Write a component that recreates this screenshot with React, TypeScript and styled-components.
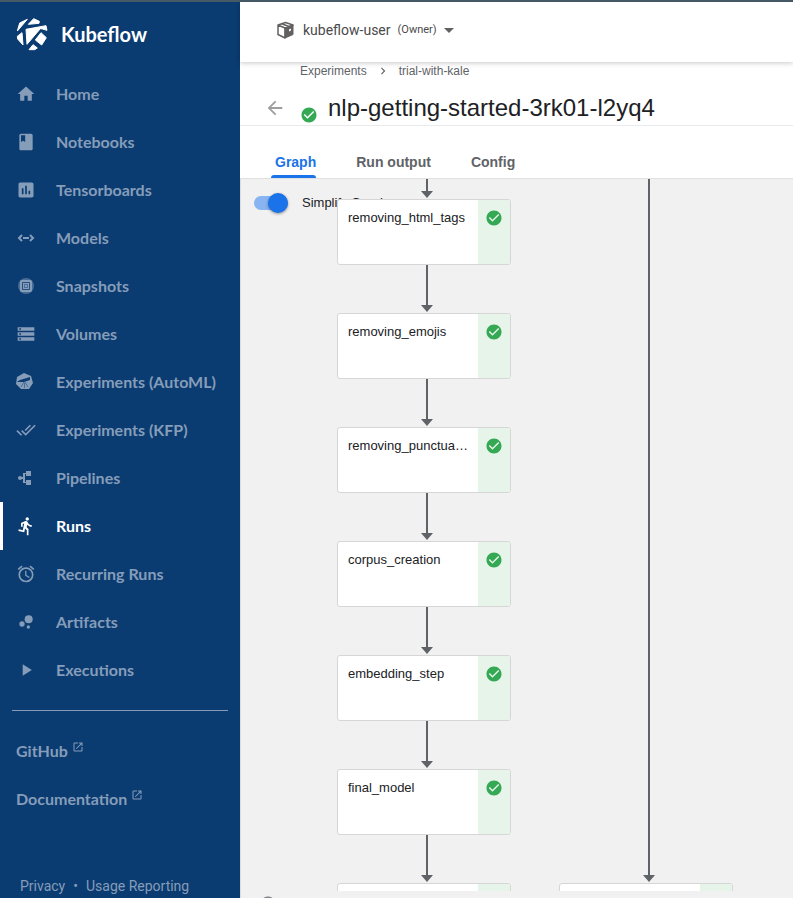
import React from "react";
import styled, { createGlobalStyle } from "styled-components";
import {
  MdHome, MdBook, MdAssessment, MdStorage, MdDoneAll, MdDirectionsRun,
  MdAlarm, MdBubbleChart, MdPlayArrow, MdLaunch, MdCheckCircle, MdArrowBack,
  MdChevronRight, MdInfoOutline,
} from "react-icons/md";

const SANS = '"Liberation Sans", Arial, sans-serif';
const ROBOTO = 'Roboto, "Liberation Sans", sans-serif';
const BRAND = 'Lato, "Open Sans", sans-serif';

const GlobalStyle = createGlobalStyle`
  * { box-sizing: border-box; }
  body { margin: 0; font-family: ${SANS}; color: #202124; }
  button { font: inherit; border: 0; padding: 0; background: none; cursor: pointer; }
  a { color: inherit; text-decoration: none; }
`;

const Page = styled.div`
  display: flex;
  height: 100vh;
  border-top: 2px solid #455a64;
  overflow: hidden;
`;

const Sidebar = styled.nav`
  flex: 0 0 240px;
  display: flex;
  flex-direction: column;
  background: #0a3b71;
  color: #869db9;
`;

const Brand = styled.a`
  display: flex;
  align-items: center;
  gap: 11px;
  height: 64px;
  padding: 0 16px;
  color: #fff;
  font: 700 20px/28px ${BRAND};
`;

const MenuList = styled.ul`
  list-style: none;
  margin: 4px 0 0;
  padding: 0;
`;

const MenuLink = styled.a<{ $active?: boolean }>`
  display: flex;
  align-items: center;
  gap: 20px;
  height: 48px;
  padding-left: ${(p) => (p.$active ? 13 : 16)}px;
  border-left: ${(p) => (p.$active ? "3px solid #fff" : "0")};
  color: ${(p) => (p.$active ? "#fff" : "inherit")};
  font: 700 16px/20px ${BRAND};
  svg { width: 20px; height: 20px; }
`;

const Divider = styled.hr`
  width: calc(100% - 24px);
  margin: 16px 12px;
  border: 0;
  border-top: 1px solid #869db9;
`;

const ExternalLink = styled.a`
  display: flex;
  align-items: center;
  gap: 4px;
  height: 48px;
  padding-left: 16px;
  font: 700 16px/20px ${BRAND};
  svg { width: 12px; height: 12px; margin-bottom: 8px; }
`;

const Legal = styled.footer`
  display: flex;
  gap: 8px;
  margin-top: auto;
  padding: 0 20px 2px;
  font: 400 14px/20px ${ROBOTO};
`;

const Main = styled.main`
  flex: 1;
  min-width: 0;
  display: flex;
  flex-direction: column;
  background: #fff;
`;

const Header = styled.header`
  flex: none;
  display: flex;
  align-items: center;
  height: 60px;
  padding: 0 36px 4px;
  box-shadow: 0 1px 5px rgba(0, 0, 0, 0.22);
`;

const NamespaceButton = styled.button`
  display: flex;
  align-items: center;
  gap: 7px;
  color: #4a4a4a;
  font: 400 14px/20px ${ROBOTO};
  small { font-size: 11px; }
`;

const Crumbs = styled.div`
  display: flex;
  align-items: center;
  gap: 9px;
  height: 18px;
  padding-left: 60px;
  color: #5f6368;
  font-size: 12px;
`;

const TitleRow = styled.div`
  display: flex;
  align-items: center;
  height: 46px;
  padding: 10px 24px 0;
  border-bottom: 1px solid #e8eaed;
`;

const BackButton = styled.button`
  display: flex;
  margin-right: 14px;
  color: #9e9e9e;
`;

const TitleCheck = styled.span`
  display: flex;
  margin: 14px 10px 0 0;
  color: #34a853;
`;

const Title = styled.h1`
  margin: 0;
  font: 400 24px/32px ${SANS};
`;

const Tabs = styled.div`
  display: flex;
  align-items: flex-end;
  gap: 32px;
  height: 53px;
  padding-left: 31px;
  border-bottom: 1px solid #e0e0e0;
`;

const Tab = styled.button<{ $active?: boolean }>`
  display: flex;
  flex-direction: column;
  align-items: flex-start;
  padding: 0 4px;
  color: ${(p) => (p.$active ? "#1a73e8" : "#5f6368")};
  font: 700 14px/26px ${SANS};
  &::after {
    content: "";
    width: calc(100% + 4px);
    height: 3px;
    margin-left: -4px;
    border-radius: 3px 3px 0 0;
    background: ${(p) => (p.$active ? "#1a73e8" : "transparent")};
  }
`;

const GraphPane = styled.section`
  flex: 1;
  min-height: 0;
  position: relative;
  overflow: hidden;
  background: #f1f1f1;
  border-left: 1px solid #dcdcdc;
`;

const ToggleLabel = styled.label`
  display: flex;
  align-items: center;
  gap: 14px;
  padding: 14px 13px;
  font-size: 13px;
  line-height: 20px;
`;

const Toggle = styled.input`
  appearance: none;
  display: flex;
  align-items: center;
  justify-content: flex-end;
  width: 34px;
  height: 14px;
  margin: 0;
  border-radius: 7px;
  background: #88b4f1;
  &::before {
    content: "";
    width: 20px;
    height: 20px;
    border-radius: 50%;
    background: #1a73e8;
    box-shadow: 0 1px 3px rgba(0, 0, 0, 0.4);
  }
`;

const Column = styled.div<{ $left: number }>`
  position: absolute;
  top: 0;
  left: ${(p) => p.$left}px;
  width: 174px;
  display: flex;
  flex-direction: column;
`;

const Edge = styled.div<{ $length: number }>`
  display: flex;
  flex-direction: column;
  align-items: center;
  height: ${(p) => p.$length}px;
  padding: 0 0 1px 6px;
  &::before {
    content: "";
    flex: 1;
    width: 2px;
    background: #5f6368;
  }
  &::after {
    content: "";
    border: 6px solid transparent;
    border-top: 7px solid #5f6368;
    border-bottom: 0;
  }
`;

const Node = styled.a`
  display: flex;
  height: 66px;
  border: 1px solid #d6d6d6;
  border-radius: 3px;
  background: #fff;
  overflow: hidden;
`;

const NodeName = styled.span`
  flex: 1;
  min-width: 0;
  padding: 8px 10px;
  font-size: 13px;
  line-height: 20px;
  overflow: hidden;
  text-overflow: ellipsis;
  white-space: nowrap;
`;

const NodeStatus = styled.span`
  flex: 0 0 32px;
  padding-top: 9px;
  text-align: center;
  background: #e6f4ea;
  color: #34a853;
`;

const GraphFooter = styled.div`
  flex: none;
  height: 7px;
  padding: 4px 18px 0;
  overflow: hidden;
  background: #f1f1f1;
  border-left: 1px solid #dcdcdc;
  color: #80868b;
  svg { display: block; }
`;

const Logo = () => (
  <svg width="34" height="34" viewBox="0 0 102 102" fill="#fff" stroke="#fff" strokeWidth="3" strokeLinejoin="round">
    <path d="M4 42 11 18 34 7Z" />
    <path d="M37 22 53 5 70 13 69 19Z" />
    <path d="M30 37 90 26 93 40 80 36 73 35 33 82Z" />
    <path d="M75 47 91 62 77 84 58 69Z" />
    <path d="M18 47 21 84 5 66 4 58Z" />
    <path d="M51 83 64 93 56 98 39 98Z" />
  </svg>
);

const ModelsIcon = () => (
  <svg viewBox="0 0 20 20" fill="none" stroke="currentColor" strokeWidth="2">
    <path d="M6 7 3 10l3 3M14 7l3 3-3 3M7 10h6" />
  </svg>
);

const SnapshotIcon = () => (
  <svg viewBox="0 0 20 20" fill="currentColor">
    <circle cx="10" cy="10" r="8" opacity="0.5" />
    <rect x="4" y="4" width="12" height="12" rx="2" />
    <g fill="none" stroke="#0a3b71">
      <path d="M6.500 6.500h7v7h-7z" opacity="0.8" />
      <path d="M8.500 8.500h3v3h-3z" opacity="0.5" />
    </g>
  </svg>
);

const KatibIcon = () => (
  <svg viewBox="0 0 20 20" fill="currentColor">
    <path d="M8 1 15 4 17 11 13 17H5L0 12 1 5Z" />
    <path d="M1 10 4 8 14 5v3L8 10H3z" fill="#0a3b71" />
    <path d="M8 10 5 15M8.500 11v5M9 10l3 5" fill="none" stroke="#0a3b71" opacity="0.5" />
  </svg>
);

const PipelineIcon = () => (
  <svg viewBox="0 0 20 20" fill="currentColor">
    <circle cx="4" cy="10" r="2" />
    <path d="M10 3h5v5h-5V6H9v8h1v-2h5v5h-5v-2H7v-4H4V9h3V5h3z" />
  </svg>
);

const BoxIcon = () => (
  <svg width="20" height="20" viewBox="0 0 20 20" fill="none" stroke="#616161" strokeWidth="1" strokeLinejoin="round">
    <path d="M9 8v10l8-3.500V5z" fill="#616161" />
    <path d="M2 5v9.500L9 18V8zM2 5l7.500-2.500L17 5 9 8zM5 3.500 13 6.500" strokeWidth="1.500" />
    <path d="M13 9.500l2-1v2l-2 1z" fill="#fff" stroke="none" />
  </svg>
);

const Caret = () => (
  <svg width="10" height="5" viewBox="0 0 10 5" fill="#616161"><path d="M0 0h10L5 5z" /></svg>
);

const MENU = [
  { label: "Home", icon: <MdHome /> },
  { label: "Notebooks", icon: <MdBook /> },
  { label: "Tensorboards", icon: <MdAssessment /> },
  { label: "Models", icon: <ModelsIcon /> },
  { label: "Snapshots", icon: <SnapshotIcon /> },
  { label: "Volumes", icon: <MdStorage /> },
  { label: "Experiments (AutoML)", icon: <KatibIcon /> },
  { label: "Experiments (KFP)", icon: <MdDoneAll /> },
  { label: "Pipelines", icon: <PipelineIcon /> },
  { label: "Runs", icon: <MdDirectionsRun />, active: true },
  { label: "Recurring Runs", icon: <MdAlarm /> },
  { label: "Artifacts", icon: <MdBubbleChart /> },
  { label: "Executions", icon: <MdPlayArrow /> },
];

const STEPS = [
  "removing_html_tags", "removing_emojis", "removing_punctuation", "corpus_creation",
  "embedding_step", "final_model", "",
];

const GraphNode = ({ name }: { name: string }) => (
  <Node href="#">
    <NodeName>{name}</NodeName>
    <NodeStatus><MdCheckCircle size={18} /></NodeStatus>
  </Node>
);

export default function App() {
  return (
    <>
      <GlobalStyle />
      <Page>
        <Sidebar>
          <Brand href="#"><Logo />Kubeflow</Brand>
          <MenuList>
            {MENU.map((m) => (
              <li key={m.label}>
                <MenuLink href="#" $active={m.active}>{m.icon}{m.label}</MenuLink>
              </li>
            ))}
          </MenuList>
          <Divider />
          <ExternalLink href="#">GitHub<MdLaunch /></ExternalLink>
          <ExternalLink href="#">Documentation<MdLaunch /></ExternalLink>
          <Legal><a href="#">Privacy</a><span>•</span><a href="#">Usage Reporting</a></Legal>
        </Sidebar>
        <Main>
          <Header>
            <NamespaceButton>
              <BoxIcon />kubeflow-user <small>(Owner)</small><Caret />
            </NamespaceButton>
          </Header>
          <Crumbs><a href="#">Experiments</a><MdChevronRight size={14} /><a href="#">trial-with-kale</a></Crumbs>
          <TitleRow>
            <BackButton aria-label="Back"><MdArrowBack size={22} /></BackButton>
            <TitleCheck><MdCheckCircle size={18} /></TitleCheck>
            <Title>nlp-getting-started-3rk01-l2yq4</Title>
          </TitleRow>
          <Tabs>
            <Tab $active>Graph</Tab><Tab>Run output</Tab><Tab>Config</Tab>
          </Tabs>
          <GraphPane>
            <ToggleLabel><Toggle type="checkbox" defaultChecked />Simplify Graph</ToggleLabel>
            <Column $left={96}>
              {STEPS.map((s, i) => (
                <React.Fragment key={i}><Edge $length={i ? 48 : 20} /><GraphNode name={s} /></React.Fragment>
              ))}
            </Column>
            <Column $left={318}><Edge $length={704} /><GraphNode name="" /></Column>
          </GraphPane>
          <GraphFooter><MdInfoOutline size={18} /></GraphFooter>
        </Main>
      </Page>
    </>
  );
}
